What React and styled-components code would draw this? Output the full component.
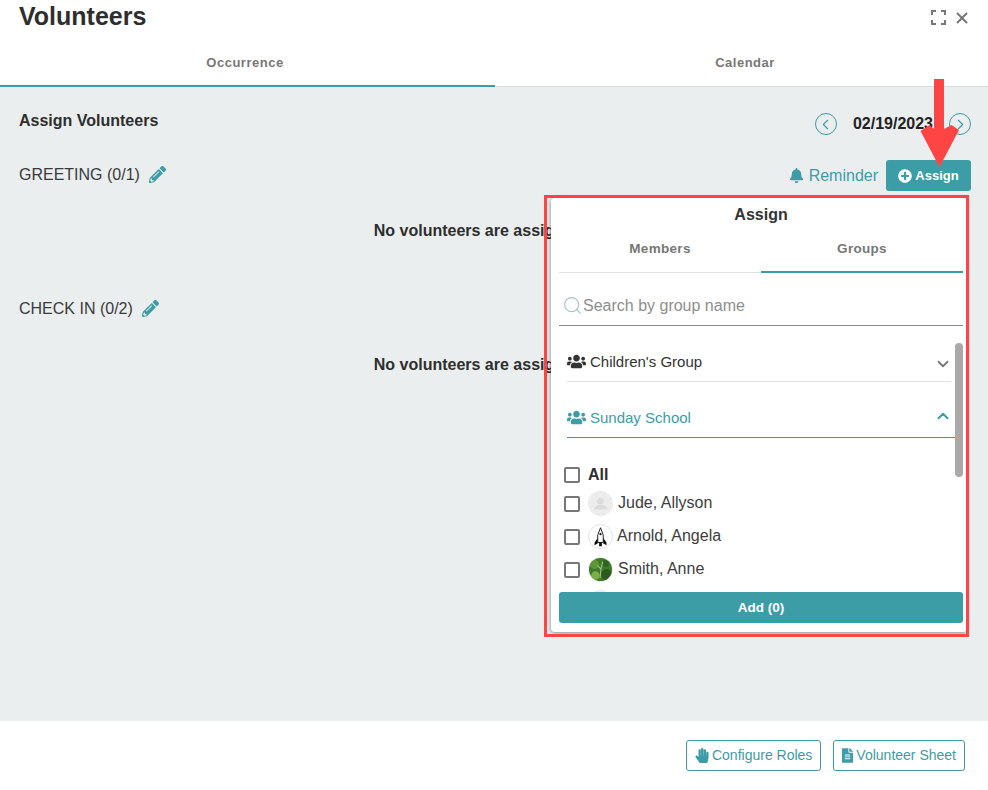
import React from "react";
import styled, { createGlobalStyle } from "styled-components";
import {
  FaBell,
  FaFileAlt,
  FaHandPaper,
  FaPencilAlt,
  FaPlusCircle,
  FaUsers,
} from "react-icons/fa";
import { ChevronDown, ChevronLeft, ChevronRight, ChevronUp, Search, X } from "lucide-react";

const teal = "#3c9da6";
const fontStack = `"Liberation Sans", Arial, sans-serif`;

const GlobalStyle = createGlobalStyle`
  html, body {
    margin: 0;
    padding: 0;
    background: #fff;
  }
  body {
    font-family: ${fontStack};
    color: #2b2b2b;
  }
  * {
    box-sizing: border-box;
  }
`;

const Page = styled.div`
  position: relative;
  width: 988px;
  height: 790px;
  display: flex;
  flex-direction: column;
  overflow: hidden;
`;

const Header = styled.header`
  height: 45px;
  flex: none;
  display: flex;
  align-items: flex-start;
  justify-content: space-between;
  padding: 0 17px 0 19px;
`;

const Title = styled.h1`
  margin: 0;
  font-size: 25px;
  line-height: 33px;
  font-weight: 700;
  color: #2e2e2e;
`;

const WindowTools = styled.div`
  display: flex;
  align-items: center;
  gap: 7px;
  height: 35px;
  color: #777;
`;

const TopTabs = styled.nav`
  height: 42px;
  flex: none;
  display: grid;
  grid-template-columns: 495px 493px;
  border-bottom: 1px solid #dcdcdc;
`;

const TopTab = styled.div`
  height: ${(p) => (p.$active ? "42px" : "41px")};
  padding: 10px ${(p) => (p.$active ? "5px" : "0")} 0 ${(p) => (p.$active ? "0" : "7px")};
  text-align: center;
  font-size: 13px;
  line-height: 16px;
  font-weight: 700;
  letter-spacing: 0.5px;
  color: #777;
  border-bottom: ${(p) => (p.$active ? `2px solid ${teal}` : "none")};
`;

const Content = styled.main`
  position: relative;
  flex: 1;
  background: #ebeeef;
  padding: 0 17px 0 19px;
`;

const TopRow = styled.div`
  height: 73px;
  display: flex;
  align-items: flex-start;
  justify-content: space-between;
  padding-top: 24px;
`;

const SectionTitle = styled.h2`
  margin: 0;
  font-size: 16px;
  line-height: 20px;
  font-weight: 700;
  color: #2e2e2e;
`;

const DatePicker = styled.div`
  display: flex;
  align-items: center;
  height: 22px;
  margin-top: 2px;
  font-size: 16px;
  font-weight: 700;
  color: #222;
  gap: 16px;
`;

const DateText = styled.span`
  white-space: nowrap;
`;

const RoundButton = styled.span`
  width: 22px;
  height: 22px;
  border: 1.5px solid ${teal};
  border-radius: 50%;
  color: ${teal};
  display: flex;
  align-items: center;
  justify-content: center;
`;

const RoleSection = styled.section`
  height: 134px;
`;

const RoleHead = styled.div`
  height: 31px;
  display: flex;
  align-items: center;
  justify-content: space-between;
`;

const RoleName = styled.div`
  display: flex;
  align-items: center;
  gap: 9px;
  font-size: 16px;
  color: #3a3a3a;
  margin-top: -2px;

  svg {
    color: ${teal};
    font-size: 17px;
  }
`;

const RoleActions = styled.div`
  display: flex;
  align-items: center;
  gap: 8px;
`;

const ReminderLink = styled.span`
  display: flex;
  align-items: center;
  gap: 5px;
  font-size: 16px;
  color: ${teal};

  svg {
    font-size: 15px;
  }
`;

const AssignButton = styled.button`
  width: 85px;
  height: 31px;
  border: none;
  border-radius: 3px;
  background: ${teal};
  color: #fff;
  font: 700 13px ${fontStack};
  display: flex;
  align-items: center;
  justify-content: center;
  gap: 3px;

  svg {
    font-size: 14px;
  }
`;

const EmptyNote = styled.p`
  margin: 30px 0 0;
  padding-right: 6px;
  text-align: center;
  font-size: 16px;
  line-height: 20px;
  font-weight: 700;
  color: #2e2e2e;
`;

const Popover = styled.div`
  position: absolute;
  left: 551px;
  top: 111px;
  width: 416px;
  height: 434px;
  background: #fff;
  border-radius: 4px;
  box-shadow: 0 1px 4px rgba(0, 0, 0, 0.45);
  padding: 0 4px 0 8px;
  display: flex;
  flex-direction: column;
`;

const PopoverTitle = styled.div`
  height: 33px;
  flex: none;
  text-align: center;
  font-size: 16px;
  line-height: 33px;
  font-weight: 700;
  color: #333;
`;

const PopoverTabs = styled.div`
  height: 42px;
  flex: none;
  display: flex;
  border-bottom: 1px solid #e0e0e0;
`;

const PopoverTab = styled.div`
  flex: 1;
  height: ${(p) => (p.$active ? "42px" : "41px")};
  padding-top: 10px;
  text-align: center;
  font-size: 13.5px;
  line-height: 16px;
  font-weight: 700;
  letter-spacing: 0.3px;
  color: #777;
  border-bottom: ${(p) => (p.$active ? `2px solid ${teal}` : "none")};
`;

const SearchBar = styled.div`
  height: 53px;
  flex: none;
  display: flex;
  align-items: center;
  padding: 13px 0 0 3px;
  border-bottom: 1px solid #888;
  font-size: 16px;
  color: #8e8e8e;

  svg {
    color: #a9c4c6;
  }
`;

const ScrollArea = styled.div`
  position: relative;
  flex: 1;
  overflow: hidden;
`;

const ScrollThumb = styled.div`
  position: absolute;
  right: 0;
  top: 17px;
  width: 8px;
  height: 134px;
  border-radius: 4px;
  background: #a9a9a9;
`;

const GroupRow = styled.div`
  height: 56px;
  margin: 0 ${(p) => (p.$open ? 8 : 12)}px 0 8px;
  display: flex;
  align-items: center;
  justify-content: space-between;
  padding-top: 15px;
  border-bottom: 1px solid ${(p) => (p.$open ? teal : "#e0e0e0")};
  color: ${(p) => (p.$open ? teal : "#333")};
  font-size: 15px;
`;

const GroupName = styled.span`
  display: flex;
  align-items: center;
  gap: 4px;

  svg {
    font-size: 19px;
  }
`;

const Caret = styled.span`
  display: flex;
  margin: ${(p) => (p.$open ? "-3px 3px 0 0" : "6px -1px 0 0")};
  color: ${(p) => (p.$open ? teal : "#777")};
`;

const MemberList = styled.div`
  padding: 24px 0 0 5px;
`;

const MemberRow = styled.label`
  height: ${(p) => p.$height || 33}px;
  display: flex;
  align-items: center;
  gap: 8px;
  font-size: 16px;
  color: #3d3d3d;
`;

const AllLabel = styled.span`
  font-weight: 700;
  color: #2e2e2e;
`;

const CheckBox = styled.span`
  width: 16px;
  height: 16px;
  flex: none;
  border: 2px solid #777;
  border-radius: 2px;
  background: #fff;
`;

const Person = styled.span`
  display: flex;
  align-items: center;
  gap: ${(p) => p.$gap}px;
`;

const PersonName = styled.span`
  margin-top: -2px;
`;

const Avatar = styled.span`
  width: 25px;
  height: 25px;
  flex: none;
  border-radius: 50%;
  border: 1.5px solid #e3e3e3;
  overflow: hidden;
  background: #fff;
  display: block;

  svg {
    display: block;
    width: 100%;
    height: 100%;
  }
`;

const AddButton = styled.button`
  height: 31px;
  flex: none;
  margin: 0 0 9px;
  border: none;
  border-radius: 3px;
  background: ${teal};
  color: #fff;
  font: 700 13.5px ${fontStack};
`;

const Footer = styled.footer`
  height: 69px;
  flex: none;
  display: flex;
  justify-content: flex-end;
  gap: 12px;
  padding: 19px 23px 0 0;
`;

const OutlineButton = styled.button`
  height: 31px;
  padding: 0 8px 1px;
  border: 1px solid ${teal};
  border-radius: 3px;
  background: #fff;
  color: ${teal};
  font: 400 14px ${fontStack};
  display: flex;
  align-items: center;
  gap: 3px;

  svg {
    width: ${(p) => p.$iconWidth}px;
    height: 15px;
    flex: none;
  }
`;

const Highlight = styled.div`
  position: absolute;
  left: 544px;
  top: 195px;
  width: 425px;
  height: 442px;
  border: 3px solid #ff4444;
  pointer-events: none;
`;

const ArrowMark = styled.svg`
  position: absolute;
  left: 915px;
  top: 75px;
  width: 50px;
  height: 95px;
  pointer-events: none;
`;

const FullscreenIcon = () => (
  <svg width="15" height="15" viewBox="0 0 15 15" fill="none" stroke="#777" strokeWidth="2">
    <path d="M1 5V1h4M10 1h4v4M14 10v4h-4M5 14H1v-4" />
  </svg>
);

const PlaceholderFace = () => (
  <svg viewBox="0 0 25 25">
    <circle cx="12.5" cy="12.5" r="12.5" fill="#ececec" />
    <circle cx="12.5" cy="10" r="3.6" fill="#dcdcdc" />
    <path d="M5.5 19c0-3.6 3.2-5 7-5s7 1.4 7 5z" fill="#dcdcdc" />
  </svg>
);

const RocketFace = () => (
  <svg viewBox="0 0 25 25">
    <path d="M12.5 3l3 8v8h-6v-8z" fill="#fff" stroke="#111" strokeWidth="1" />
    <circle cx="12.5" cy="10" r="1.2" fill="#111" />
    <path d="M9.5 14l-3.5 5v3l3.5-2zM15.5 14l3.5 5v3l-3.5-2z" fill="#111" />
    <path d="M11 19h3v4h-3z" fill="#111" />
  </svg>
);

const LeafFace = () => (
  <svg viewBox="0 0 25 25">
    <rect width="25" height="25" fill="#3f7a26" />
    <circle cx="6" cy="7" r="5" fill="#5c9636" />
    <circle cx="19" cy="18" r="6" fill="#2c5c1b" />
    <circle cx="7" cy="19" r="4.5" fill="#7cae47" />
    <circle cx="18" cy="6" r="3.5" fill="#2f6420" />
    <path d="M15 4l-2 8-1 10M13 12l-4-4" stroke="#a9b98e" strokeWidth="1.2" fill="none" />
  </svg>
);

const members = [
  { id: 1, name: "Jude, Allyson", face: <PlaceholderFace />, gap: 5 },
  { id: 2, name: "Arnold, Angela", face: <RocketFace />, gap: 4 },
  { id: 3, name: "Smith, Anne", face: <LeafFace />, gap: 5 },
  { id: 4, name: "", face: <PlaceholderFace />, gap: 5 },
];

const roles = ["GREETING (0/1)", "CHECK IN (0/2)"];

export default function App() {
  return (
    <Page>
      <GlobalStyle />
      <Header>
        <Title>Volunteers</Title>
        <WindowTools>
          <FullscreenIcon />
          <X size={18} strokeWidth={2.6} />
        </WindowTools>
      </Header>
      <TopTabs>
        <TopTab $active>Occurrence</TopTab>
        <TopTab>Calendar</TopTab>
      </TopTabs>
      <Content>
        <TopRow>
          <SectionTitle>Assign Volunteers</SectionTitle>
          <DatePicker>
            <RoundButton>
              <ChevronLeft size={17} strokeWidth={1.6} />
            </RoundButton>
            <DateText>02/19/2023</DateText>
            <RoundButton>
              <ChevronRight size={17} strokeWidth={1.6} />
            </RoundButton>
          </DatePicker>
        </TopRow>
        {roles.map((role, i) => (
          <RoleSection key={role}>
            <RoleHead>
              <RoleName>
                {role} <FaPencilAlt />
              </RoleName>
              {i === 0 && (
                <RoleActions>
                  <ReminderLink>
                    <FaBell /> Reminder
                  </ReminderLink>
                  <AssignButton>
                    <FaPlusCircle /> Assign
                  </AssignButton>
                </RoleActions>
              )}
            </RoleHead>
            <EmptyNote>No volunteers are assigned yet</EmptyNote>
          </RoleSection>
        ))}
        <Popover>
          <PopoverTitle>Assign</PopoverTitle>
          <PopoverTabs>
            <PopoverTab>Members</PopoverTab>
            <PopoverTab $active>Groups</PopoverTab>
          </PopoverTabs>
          <SearchBar>
            <Search size={21} strokeWidth={1.3} />
            Search by group name
          </SearchBar>
          <ScrollArea>
            <ScrollThumb />
            <GroupRow>
              <GroupName>
                <FaUsers /> Children's Group
              </GroupName>
              <Caret>
                <ChevronDown size={18} strokeWidth={2.4} />
              </Caret>
            </GroupRow>
            <GroupRow $open>
              <GroupName>
                <FaUsers /> Sunday School
              </GroupName>
              <Caret $open>
                <ChevronUp size={18} strokeWidth={2.6} />
              </Caret>
            </GroupRow>
            <MemberList>
              <MemberRow $height={25}>
                <CheckBox />
                <AllLabel>All</AllLabel>
              </MemberRow>
              {members.map((m) => (
                <MemberRow key={m.id}>
                  <CheckBox />
                  <Person $gap={m.gap}>
                    <Avatar>{m.face}</Avatar>
                    <PersonName>{m.name}</PersonName>
                  </Person>
                </MemberRow>
              ))}
            </MemberList>
          </ScrollArea>
          <AddButton>Add (0)</AddButton>
        </Popover>
      </Content>
      <Footer>
        <OutlineButton $iconWidth={14}>
          <FaHandPaper /> Configure Roles
        </OutlineButton>
        <OutlineButton $iconWidth={11}>
          <FaFileAlt /> Volunteer Sheet
        </OutlineButton>
      </Footer>
      <Highlight />
      <ArrowMark viewBox="0 0 50 95">
        <path d="M19 4h10v50l7.5-4 7.5 5-19.5 37-19-36 9-6 4.5 4z" fill="#ff4444" />
      </ArrowMark>
    </Page>
  );
}
